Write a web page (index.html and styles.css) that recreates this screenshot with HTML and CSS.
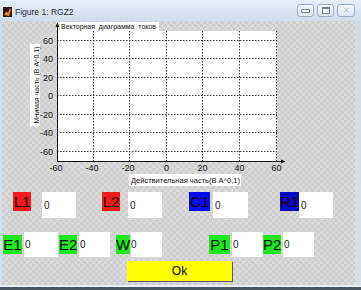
FILE: index.html
```html
<!DOCTYPE html>
<html>
<head>
    <title>Figure 1: RGZ2</title>
    <link rel="stylesheet" href="styles.css">
</head>
<body>
<div class="window">
  <div class="titlebar">
    <svg class="app-icon" width="9" height="10" viewBox="0 0 9 10">
      <rect width="9" height="10" fill="#2b1d12"/>
      <path d="M1 8 L3 5 L5 6 L7 1 L8 3 L6 9 Z" fill="#e8801c"/>
      <path d="M3 5 L5 6 L4 8 Z" fill="#f6c040"/>
    </svg>
    <span class="title">Figure 1: RGZ2</span>
    <div class="win-buttons">
      <div class="win-btn"><span class="glyph-min"></span></div>
      <div class="win-btn"><span class="glyph-max"></span></div>
      <div class="win-btn close">&#x2715;</div>
    </div>
  </div>

  <div class="client">
    <!-- axes: drawn in page coordinates via the viewBox offset -->
    <svg class="plot" width="353" height="165" viewBox="2 21 353 165">
      <rect x="57" y="31" width="220" height="130" fill="#fff"/>
      <rect x="58" y="22" width="101" height="9" fill="#fff"/>
      <text class="axis-title" x="61" y="29" textLength="95" lengthAdjust="spacingAndGlyphs" xml:space="preserve">Векторная  диаграмма  токов</text>

      <g class="grid">
        <line x1="93.5" y1="31" x2="93.5" y2="161"/>
        <line x1="129.5" y1="31" x2="129.5" y2="161"/>
        <line x1="166.5" y1="31" x2="166.5" y2="161"/>
        <line x1="202.5" y1="31" x2="202.5" y2="161"/>
        <line x1="239.5" y1="31" x2="239.5" y2="161"/>
        <line x1="276.5" y1="31" x2="276.5" y2="161"/>
        <line x1="57" y1="40.5" x2="277" y2="40.5"/>
        <line x1="57" y1="58.5" x2="277" y2="58.5"/>
        <line x1="57" y1="77.5" x2="277" y2="77.5"/>
        <line x1="57" y1="95.5" x2="277" y2="95.5"/>
        <line x1="57" y1="114.5" x2="277" y2="114.5"/>
        <line x1="57" y1="132.5" x2="277" y2="132.5"/>
        <line x1="57" y1="151.5" x2="277" y2="151.5"/>
      </g>

      <g class="axis">
        <line x1="57.5" y1="161.5" x2="57.5" y2="25"/>
        <line x1="57" y1="161.5" x2="283" y2="161.5"/>
      </g>
      <polygon points="55.5,27 57.5,22.5 59.5,27" fill="#111"/>
      <polygon points="281,159.5 285.5,161.5 281,163.5" fill="#111"/>

      <g class="ytick">
        <text x="53" y="43.5">60</text>
        <text x="53" y="61.5">40</text>
        <text x="53" y="80.5">20</text>
        <text x="53" y="98.5">0</text>
        <text x="53" y="117.5">-20</text>
        <text x="53" y="135.5">-40</text>
        <text x="53" y="154.5">-60</text>
      </g>
      <g class="xtick">
        <text x="56" y="171">-60</text>
        <text x="92" y="171">-40</text>
        <text x="128" y="171">-20</text>
        <text x="166.5" y="171">0</text>
        <text x="202.5" y="171">20</text>
        <text x="239.5" y="171">40</text>
        <text x="276.5" y="171">60</text>
      </g>

      <rect x="129" y="174" width="112" height="12" fill="#fff"/>
      <text class="axis-label" x="131" y="183" textLength="109" lengthAdjust="spacingAndGlyphs">Действительная часть(В А^0,1)</text>

      <rect x="30" y="44" width="10" height="82" fill="#fff"/>
      <text class="axis-label" transform="translate(38.5,85) rotate(-90)" text-anchor="middle" textLength="77" lengthAdjust="spacingAndGlyphs">Мнимая часть (В А^0,1)</text>
    </svg>

    <div class="row row-top">
      <div class="tag red l1">L1</div>
      <input class="edit e-l1" type="text" value="0">
      <div class="tag red l2">L2</div>
      <input class="edit e-l2" type="text" value="0">
      <div class="tag blue c1">C1</div>
      <input class="edit e-c1" type="text" value="0">
      <div class="tag navy r1">R1</div>
      <input class="edit e-r1" type="text" value="0">
    </div>

    <div class="row row-bottom">
      <div class="tag green t-e1">E1</div>
      <input class="edit small e-e1" type="text" value="0">
      <div class="tag green t-e2">E2</div>
      <input class="edit small" type="text" value="0">
      <div class="tag green t-w">W</div>
      <input class="edit small e-w" type="text" value="0">
      <div class="tag green t-p1">P1</div>
      <input class="edit small" type="text" value="0">
      <div class="tag green t-p2">P2</div>
      <input class="edit small" type="text" value="0">
    </div>

    <button type="button" class="ok-btn">Ok</button>
  </div>
  <div class="bottom-frame"></div>
</div>
</body>
</html>
```

FILE: styles.css
```css
body {
    margin: 0;
    font-family: "Liberation Sans", Arial, sans-serif;
    background-color: #fff;
}
.window {
    width: 361px;
    height: 290px;
    background: linear-gradient(to bottom, #e6eef8, #cfdcec 22px, #d3dfed);
    display: flex;
    flex-direction: column;
}
.titlebar {
    height: 21px;
    display: flex;
    align-items: center;
}
.app-icon {
    margin-left: 3px;
    margin-top: 3px;
}
.title {
    margin-left: 3px;
    margin-top: 3px;
    font-size: 8.5px;
    color: #1e2a38;
}
.win-buttons {
    margin-left: auto;
    margin-right: 6px;
    display: flex;
    gap: 3px;
}
.win-btn {
    width: 15px;
    height: 11px;
    border: 1px solid #9aaec6;
    border-radius: 3px;
    background: linear-gradient(to bottom, #f4f8fc, #d9e4f0);
    display: flex;
    align-items: center;
    justify-content: center;
}
.win-btn.close {
    width: 16px;
    font-size: 8px;
    line-height: 1;
    color: #b8c2cc;
}
.glyph-min {
    width: 7px;
    height: 2px;
    border: 1px solid #6d7d90;
    border-radius: 1px;
    background: #fff;
}
.glyph-max {
    width: 6px;
    height: 4px;
    border: 1px solid #6d7d90;
    border-top-width: 2px;
    background: #fff;
}

.client {
    margin-left: 2px;
    width: 353px;
    height: 264px;
    background-color: #d5d5d5;
    background-image: repeating-conic-gradient(#cecece 0 25%, #dbdbdb 0 50%);
    background-size: 6px 6px;
    display: flex;
    flex-direction: column;
}
.bottom-frame {
    height: 5px;
    background: linear-gradient(to bottom, #e9eff6 0, #e9eff6 2px, #4a5562 2px);
}

.plot {
    display: block;
}
.plot text {
    font-family: "Liberation Sans", Arial, sans-serif;
    fill: #111;
}
.grid line {
    stroke: #3a3a3a;
    stroke-width: 1;
    stroke-dasharray: 1.5 1.5;
}
.axis line {
    stroke: #111;
    stroke-width: 1;
}
.ytick text {
    font-size: 9px;
    text-anchor: end;
}
.xtick text {
    font-size: 9px;
    text-anchor: middle;
}
.axis-title {
    font-size: 8px;
}
.axis-label {
    font-size: 8px;
}

.row {
    display: flex;
}
.row-top {
    margin-top: 6px;
    height: 26px;
    align-items: flex-start;
}
.row-bottom {
    margin-top: 14px;
    height: 25px;
    align-items: center;
}
.tag {
    height: 19px;
    line-height: 19px;
    font-size: 15px;
    color: #1a0000;
    text-align: center;
    white-space: nowrap;
}
.red { background-color: #f01c1c; }
.blue { background-color: #0a0af2; }
.navy { background-color: #0808c8; }
.green { background-color: #1ee81e; color: #001000; }

.edit {
    box-sizing: border-box;
    width: 34px;
    height: 26px;
    border: none;
    padding: 0 0 0 2px;
    margin: 0;
    background: #fff;
    font-family: "Liberation Sans", Arial, sans-serif;
    font-size: 10px;
    color: #222;
    outline: none;
}
.edit.small {
    width: 31px;
    height: 25px;
    margin-left: 2px;
    padding-left: 1px;
}

/* top row positions */
.l1 { width: 18px; margin-left: 11px; }
.e-l1 { margin-left: 11px; }
.l2 { width: 18px; margin-left: 26px; }
.e-l2 { margin-left: 8px; }
.c1 { width: 21px; margin-left: 27px; }
.e-c1 { width: 35px; margin-left: 3px; }
.r1 { width: 19px; margin-left: 32px; }
.e-r1 { margin-left: 0; }

/* bottom row positions */
.t-e1 { width: 19px; margin-left: 1px; }
.edit.e-e1 { width: 34px; }
.t-e2 { width: 18px; margin-left: 1px; }
.t-w { width: 14px; margin-left: 6px; }
.edit.e-w { margin-left: 1px; padding-left: 0; }
.t-p1 { width: 21px; margin-left: 47px; }
.t-p2 { width: 18px; margin-left: 0; }

.ok-btn {
    margin-top: 4px;
    margin-left: 125px;
    width: 105px;
    height: 20px;
    padding: 0;
    border: none;
    background-color: #ffff00;
    box-shadow: 1px 1px 0 #5a5a5a;
    font-family: "Liberation Sans", Arial, sans-serif;
    font-size: 12px;
    color: #000;
}
```
